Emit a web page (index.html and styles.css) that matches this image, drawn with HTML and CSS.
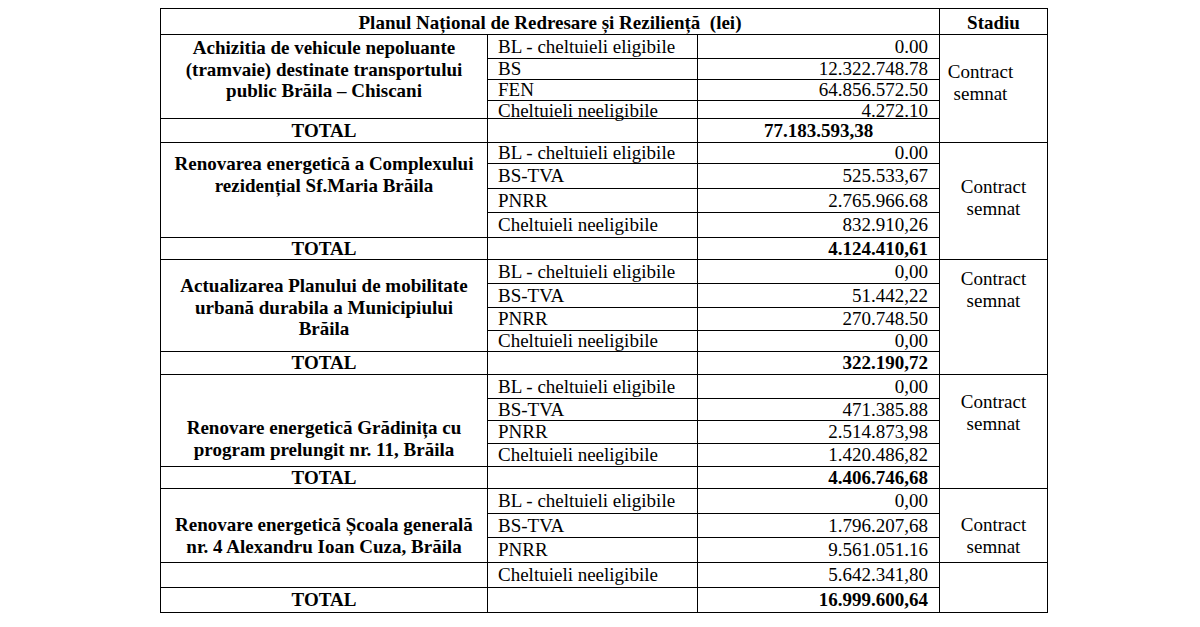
FILE: index.html
```html
<!DOCTYPE html>
<html lang="ro">
<head>
<meta charset="utf-8">
<title>PNRR</title>
<link rel="stylesheet" href="styles.css">
</head>
<body>
<table class="pnrr">
  <colgroup>
    <col class="c-title">
    <col class="c-label">
    <col class="c-value">
    <col class="c-stage">
  </colgroup>
  <thead>
    <tr class="h26">
      <th colspan="3" class="head">Planul Național de Redresare și Reziliență &nbsp;(lei)</th>
      <th class="head">Stadiu</th>
    </tr>
  </thead>
  <tbody>
    <!-- Group 1 -->
    <tr class="h24">
      <td rowspan="4" class="title pt2">Achizitia de vehicule nepoluante<br>(tramvaie) destinate transportului<br>public Brăila – Chiscani</td>
      <td class="label">BL - cheltuieli eligibile</td>
      <td class="value">0.00</td>
      <td rowspan="5" class="stage pt26 shift">Contract<br>semnat</td>
    </tr>
    <tr class="h21"><td class="label">BS</td><td class="value">12.322.748.78</td></tr>
    <tr class="h21"><td class="label">FEN</td><td class="value">64.856.572.50</td></tr>
    <tr class="h18"><td class="label low">Cheltuieli neeligibile</td><td class="value low">4.272.10</td></tr>
    <tr class="h24"><td class="total">TOTAL</td><td></td><td class="value bold center">77.183.593,38</td></tr>

    <!-- Group 2 -->
    <tr class="h21">
      <td rowspan="4" class="title pt10">Renovarea energetică a Complexului<br>rezidențial Sf.Maria Brăila</td>
      <td class="label">BL - cheltuieli eligibile</td>
      <td class="value">0.00</td>
      <td rowspan="5" class="stage pt33">Contract<br>semnat</td>
    </tr>
    <tr class="h25"><td class="label">BS-TVA</td><td class="value">525.533,67</td></tr>
    <tr class="h24"><td class="label">PNRR</td><td class="value">2.765.966.68</td></tr>
    <tr class="h25"><td class="label">Cheltuieli neeligibile</td><td class="value">832.910,26</td></tr>
    <tr class="h22"><td class="total">TOTAL</td><td></td><td class="value bold">4.124.410,61</td></tr>

    <!-- Group 3 -->
    <tr class="h24">
      <td rowspan="4" class="title pt15">Actualizarea Planului de mobilitate<br>urbană durabila a Municipiului<br>Brăila</td>
      <td class="label">BL - cheltuieli eligibile</td>
      <td class="value">0,00</td>
      <td rowspan="5" class="stage pt8">Contract<br>semnat</td>
    </tr>
    <tr class="h24"><td class="label">BS-TVA</td><td class="value">51.442,22</td></tr>
    <tr class="h23"><td class="label">PNRR</td><td class="value">270.748.50</td></tr>
    <tr class="h21"><td class="label">Cheltuieli neeligibile</td><td class="value">0,00</td></tr>
    <tr class="h23"><td class="total">TOTAL</td><td></td><td class="value bold">322.190,72</td></tr>

    <!-- Group 4 -->
    <tr class="h24">
      <td rowspan="4" class="title pt42">Renovare energetică Grădinița cu<br>program prelungit nr. 11, Brăila</td>
      <td class="label">BL - cheltuieli eligibile</td>
      <td class="value">0,00</td>
      <td rowspan="5" class="stage pt16">Contract<br>semnat</td>
    </tr>
    <tr class="h22"><td class="label">BS-TVA</td><td class="value">471.385.88</td></tr>
    <tr class="h23"><td class="label">PNRR</td><td class="value">2.514.873,98</td></tr>
    <tr class="h23"><td class="label">Cheltuieli neeligibile</td><td class="value">1.420.486,82</td></tr>
    <tr class="h22"><td class="total">TOTAL</td><td></td><td class="value bold">4.406.746,68</td></tr>

    <!-- Group 5 -->
    <tr class="h25">
      <td rowspan="3" class="title pt25">Renovare energetică Școala generală<br>nr. 4 Alexandru Ioan Cuza, Brăila</td>
      <td class="label">BL - cheltuieli eligibile</td>
      <td class="value">0,00</td>
      <td rowspan="3" class="stage pt25">Contract<br>semnat</td>
    </tr>
    <tr class="h24"><td class="label">BS-TVA</td><td class="value">1.796.207,68</td></tr>
    <tr class="h25"><td class="label">PNRR</td><td class="value">9.561.051.16</td></tr>
    <tr class="h25"><td></td><td class="label">Cheltuieli neeligibile</td><td class="value">5.642.341,80</td><td rowspan="2"></td></tr>
    <tr class="h25"><td class="total">TOTAL</td><td></td><td class="value bold">16.999.600,64</td></tr>
  </tbody>
</table>
</body>
</html>
```

FILE: styles.css
```css
html, body {
  margin: 0;
  padding: 0;
  background: #ffffff;
}

body {
  font-family: "Liberation Serif", "Times New Roman", serif;
  font-size: 19px;
  color: #000;
}

.pnrr {
  margin: 8px 0 0 160px;
  border-collapse: collapse;
  table-layout: fixed;
  width: 887px;
}

.c-title { width: 327px; }
.c-label { width: 210px; }
.c-value { width: 242px; }
.c-stage { width: 108px; }

.pnrr th,
.pnrr td {
  border: 1px solid #000;
  padding: 0;
  line-height: 18px;
  vertical-align: middle;
  white-space: nowrap;
  overflow: visible;
}

.h18 { height: 18px; }
.h21 { height: 21px; }
.h22 { height: 22px; }
.h23 { height: 23px; }
.h24 { height: 24px; }
.h25 { height: 25px; }
.h26 { height: 26px; }

.pnrr .head {
  font-weight: bold;
  text-align: center;
  padding-top: 3px;
}

.pnrr .title {
  font-weight: bold;
  text-align: center;
  vertical-align: top;
  line-height: 21.5px;
}

.pnrr .label {
  text-align: left;
  padding-left: 10px;
}

.pnrr .value {
  text-align: right;
  padding-right: 11px;
}

.pnrr .bold { font-weight: bold; }
.pnrr .center { text-align: center; padding-right: 0; }

.pnrr .low { vertical-align: bottom; line-height: 14px; }

.pnrr .total {
  font-weight: bold;
  text-align: center;
}

.pnrr .stage {
  text-align: center;
  vertical-align: top;
  line-height: 22px;
}

.pnrr .stage.shift { padding-right: 26px; }

.pnrr .pt2 { padding-top: 2px; }
.pnrr .pt8 { padding-top: 8px; }
.pnrr .pt10 { padding-top: 10px; }
.pnrr .pt15 { padding-top: 15px; }
.pnrr .pt16 { padding-top: 16px; }
.pnrr .pt25 { padding-top: 25px; }
.pnrr .pt26 { padding-top: 26px; }
.pnrr .pt33 { padding-top: 33px; }
.pnrr .pt42 { padding-top: 42px; }
```
